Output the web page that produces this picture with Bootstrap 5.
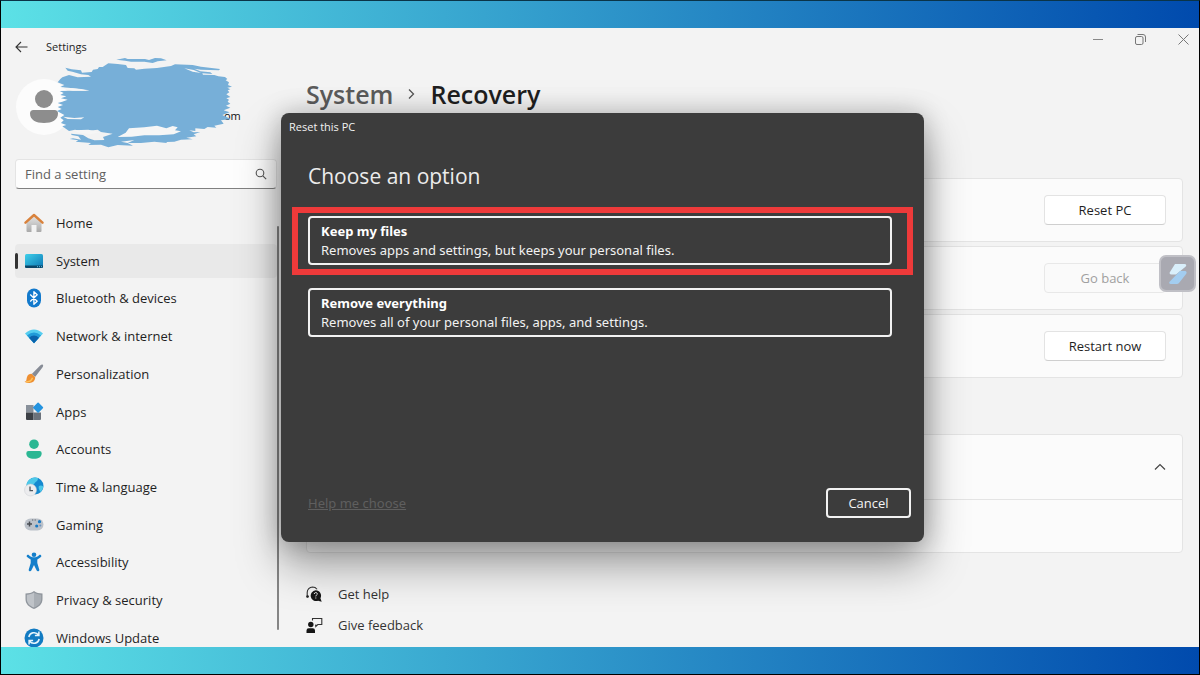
<!DOCTYPE html>
<html lang="en">
<head>
<meta charset="utf-8">
<meta name="viewport" content="width=device-width, initial-scale=1">
<title>Settings - Recovery</title>
<link href="https://cdn.jsdelivr.net/npm/bootstrap@5.3.0/dist/css/bootstrap.min.css" rel="stylesheet">
<style>
  body { font-family: "Open Sans", "Noto Sans", sans-serif; font-size: 13px; line-height: 20px; color: #1f1f1f; background: #f3f3f3; border: 1px solid #000; border-top-color: #0a3448; }
  .band { height: 27px; background: linear-gradient(90deg, #5ce1e6, #004aad); flex: none; }
  .app { min-height: 0; }
  .sidebar { width: 276px; padding-left: 14px; flex: none; }
  .titlebar { height: 38px; font-size: 11px; gap: 18px; }
  .titlebar button { line-height: 0; }
  .profile { height: 93px; padding-top: 13px; }
  .avatar { width: 56px; height: 56px; background: #fcfcfc; border-radius: 50%; margin-left: 1px; }
  .mail { left: 209px; top: 42px; font-size: 11px; line-height: 16px; color: #111; font-weight: 500; }
  .brush { left: 41px; top: -9px; }
  .search { height: 30px; background: #fdfdfd; border: 1px solid #e4e4e4; border-bottom: 1px solid #808080; border-radius: 4px; }
  .search input { font-size: 13px; line-height: 20px; padding: 0 0 0 9px; color: #333; }
  .search input::placeholder { color: #606060; opacity: 1; }
  .search button { width: 34px; line-height: 0; }
  .menu { margin: 17px 0 -8px; min-height: 440px; }
  .menu a { height: 34px; gap: 12px; padding-left: 9px; color: #1f1f1f; border-radius: 4px; position: relative; }
  .menu a.active { background: #e9e9e9; }
  .menu a.active::before { content: ""; position: absolute; left: 0; top: 9px; width: 3px; height: 16px; border-radius: 2px; background: #333; }
  .menu svg { width: 20px; height: 20px; flex: none; }
  .scroller { width: 2px; margin: 198px 0 17px; background: #858585; border-radius: 1px; flex: none; }
  .content { padding: 0 16px 0 27px; }
  .winctl { height: 22px; margin-right: -16px; }
  .winctl button { width: 43px; line-height: 0; padding: 0; }
  .winctl button:last-child { width: 31px; margin-left: 6px; }
  .crumbs { font-size: 25px; line-height: 34px; font-weight: 600; margin: 27px 0 67px; gap: 15px; }
  .crumbs a { color: #5c5c5c; }
  .pane { background: #fbfbfb; border: 1px solid #e4e4e4; border-radius: 4px; }
  .panes { gap: 4px; margin-bottom: 56px; }
  .panes .pane { height: 64px; padding-right: 16px; }
  .act { width: 122px; height: 30px; font-size: 13px; line-height: 20px; background: #fff; border: 1px solid #e3e3e3; border-bottom-color: #cfcfcf; border-radius: 4px; color: #1f1f1f; padding: 0; }
  .act:disabled { background: #fafafa; color: #a0a0a0; border-color: #e8e8e8; opacity: 1; }
  .expander { height: 65px; padding-right: 16px; border-bottom: 1px solid #e4e4e4; }
  .expander button { line-height: 0; }
  .expanded { height: 52px; }
  .links { margin-top: 31px; gap: 11px; }
  .links a { gap: 15px; color: #333; }
  .overlay { padding: 85px 0 0 5px; pointer-events: none; }
  .dlg { width: 643px; max-width: 100%; height: 429px; background: #3c3c3c; color: #f2f2f2; border-radius: 8px; box-shadow: 0 22px 44px rgba(0,0,0,.38), 0 0 26px rgba(0,0,0,.22); pointer-events: auto; }
  .dlg-title { font-size: 11px; line-height: 16px; padding: 6px 8px 0; }
  .dlg h1 { font-size: 21px; line-height: 30px; font-weight: 400; margin: 26px 27px 16px; color: #ececec; }
  .marked { border: 6px solid #ee3a3a; margin: 0 11px; padding: 3px 15px 4px 10px; }
  .option { border: 2px solid #f2f2f2; border-radius: 4px; height: 49px; padding: 0 11px; color: #f2f2f2; font-family: "Noto Sans", sans-serif; font-size: 13px; line-height: 19px; }
  .option strong { color: #fff; }
  .plain { margin: 13px 32px 0 27px; }
  .dlg-foot { padding: 0 13px 24px 27px; }
  .dlg-foot a { color: #5f5f5f; font-family: "Noto Sans", sans-serif; }
  .cancel { width: 85px; height: 30px; font-size: 13px; line-height: 20px; border: 2px solid #f2f2f2; border-radius: 4px; color: #f5f5f5; padding: 0; }
  .float-app { right: 3px; top: 227px; width: 37px; height: 37px; border-radius: 7px; background: #a9a9b1; border: 2px solid #c0c0c6; line-height: 0; }
</style>
</head>
<body class="d-flex flex-column vh-100 overflow-hidden">
<div class="band"></div>

<div class="app d-flex flex-fill position-relative overflow-hidden">
  <aside class="sidebar d-flex flex-column">
    <div class="titlebar d-flex align-items-center">
      <button class="btn p-0 border-0" aria-label="Back"><svg width="13" height="12" viewBox="0 0 13 12" fill="none" stroke="#333" stroke-width="1.100"><path d="M12.500 6H1M6 1L1 6l5 5"/></svg></button>
      <span>Settings</span>
    </div>
    <div class="profile position-relative">
      <div class="avatar">
        <svg width="56" height="56" viewBox="0 0 56 56" fill="#8d8d8d"><circle cx="28" cy="20" r="9"/><path d="M17.500 31h21a3.500 3.500 0 0 1 3.500 3.500C42 41 36 44 28 44s-14-3-14-9.500A3.500 3.500 0 0 1 17.500 31z"/></svg>
      </div>
      <span class="mail position-absolute">om</span>
      <svg class="brush position-absolute" width="177" height="92" viewBox="165 170 531 276" aria-hidden="true">
        <path fill="#77afd8" d="M346 178L372 173 380 176 432 176 444 179 462 173 480 174 497 180 470 183 455 188 430 184 390 184 372 181zM193 202L212 207 240 210 243 217 272 215 276 208 290 206 294 200 305 200 322 189 350 191 375 194 380 203 400 204 405 208 430 205 468 203 510 197 522 192 575 194 600 199 657 206 654 210 600 208 580 205 598 213 628 216 634 221 604 219 606 223 640 224 652 228 672 230 679 236 674 240 684 246 681 254 693 259 679 262 688 267 680 270 685 276 676 282 688 290 676 294 684 298 680 304 688 310 675 316 688 322 668 330 686 336 664 344 676 350 690 356 660 360 668 370 640 376 646 382 620 380 610 386 583 384 583 392 565 390 578 396 598 395 578 402 586 408 556 412 575 417 540 418 520 424 497 425 497 428 460 424 420 428 380 428 396 436 350 434 322 441 300 433 262 434 270 428 224 424 232 420 206 416 216 414 240 418 232 408 212 404 210 400 246 404 262 414 280 420 310 419 306 410 335 400 300 395 290 388 248 393 222 388 204 392 184 378 196 374 180 368 188 360 178 352 190 344 168 332 182 326 170 320 186 314 170 308 184 304 200 298 180 294 196 288 178 284 188 278 176 272 215 271 265 272 240 266 178 260 190 254 170 246 178 236 184 231 204 224 230 231 270 229 262 224 240 222 214 214 200 211z"/>
        <path fill="#f6f6f6" d="M384 384L430 381 468 376 496 384 515 377 530 381 522 390 540 393 518 402 475 405 430 405 392 409 350 410 374 397zM550 204L578 209 600 218 575 214zM186 349L220 353 250 351 240 357 200 356zM175 262L215 264 265 270 215 271zM360 424L400 419 380 428zM220 390L262 388 296 396 270 402 235 397z"/>
      </svg>
    </div>
    <form class="search d-flex align-items-center" onsubmit="return false">
      <input class="form-control border-0 bg-transparent shadow-none" type="text" placeholder="Find a setting" aria-label="Find a setting">
      <button class="btn p-0 border-0" aria-label="Search"><svg width="12" height="12" viewBox="0 0 12 12" fill="none" stroke="#555" stroke-width="1.100"><circle cx="5" cy="5" r="3.800"/><path d="M7.800 7.800L11.200 11.200"/></svg></button>
    </form>
    <nav class="menu flex-fill d-flex flex-column justify-content-between">
      <a href="#" class="d-flex align-items-center text-decoration-none">
        <svg viewBox="0 0 20 20"><defs><linearGradient id="gh" x2="0" y2="1"><stop stop-color="#e8e8e8"/><stop offset="1" stop-color="#a9a9a9"/></linearGradient></defs><path fill="url(#gh)" d="M2.500 8.500L10 2l7.500 6.500V18a1 1 0 0 1-1 1h-4v-7h-5v7h-4a1 1 0 0 1-1-1z"/><path d="M1.500 9.700L10 2l8.500 7.700" fill="none" stroke="#d9823c" stroke-width="2.400" stroke-linejoin="round" stroke-linecap="round"/></svg>Home</a>
      <a href="#" class="active d-flex align-items-center text-decoration-none" aria-current="page">
        <svg viewBox="0 0 20 20"><defs><linearGradient id="gs" x2="1" y2="1"><stop stop-color="#3fd0ea"/><stop offset="1" stop-color="#0c76b4"/></linearGradient></defs><rect x="1" y="3" width="18" height="14" rx="1.500" fill="url(#gs)"/><path d="M1 14.500h18v1a1.500 1.500 0 0 1-1.500 1.500h-15A1.500 1.500 0 0 1 1 15.500z" fill="#0b4668"/><path d="M13 15.700h1m1 0h1m1 0h1" stroke="#5ec4ea"/></svg>System</a>
      <a href="#" class="d-flex align-items-center text-decoration-none">
        <svg viewBox="0 0 20 20"><rect x="3" y="0.500" width="14" height="19" rx="7" fill="#1279cc"/><path d="M6.200 6.500l7 6.800-3.300 3V3.700l3.300 3-7 6.800" fill="none" stroke="#fff" stroke-width="1.300" stroke-linejoin="round"/></svg>Bluetooth &amp; devices</a>
      <a href="#" class="d-flex align-items-center text-decoration-none">
        <svg viewBox="0 0 20 20"><path d="M1 7.500Q10-.5 19 7.500L10 17.200z" fill="#55cdef"/><path d="M3 9.500q7-6 14 0L10 17.200z" fill="#209ad8"/><path d="M5 11.700q5-4.200 10 0L10 17.200z" fill="#0a62ab"/></svg>Network &amp; internet</a>
      <a href="#" class="d-flex align-items-center text-decoration-none">
        <svg viewBox="0 0 20 20"><path d="M18.800.8c.7.700.3 1.700-.4 2.700l-7.300 9.600-3.300-3.200L16.200 1.500c1-.8 1.900-1.300 2.600-.7z" fill="#878c96"/><path d="M7.500 9.800l3.700 3.500c.1 3.500-2.400 5.700-5.700 5.700-2 0-3.800-.4-5-1.200 2.500-.5 1.700-2.300 2.500-4.800.7-2 2.400-3.200 4.500-3.200z" fill="#ee8f31"/><path d="M2 17.800c2.800.2 5.500-1 6.500-4" stroke="#ffc35c" stroke-width="1.400" fill="none"/></svg>Personalization</a>
      <a href="#" class="d-flex align-items-center text-decoration-none">
        <svg viewBox="0 0 20 20"><path fill="#88909a" d="M2 3h7.500v7.500H2z"/><path fill="#3c4046" d="M2 10.500h7.500V18H3a1 1 0 0 1-1-1z"/><path fill="#6b727b" d="M9.500 10.500H17V17a1 1 0 0 1-1 1H9.500z"/><rect x="10.300" y="1.800" width="7.600" height="7.600" rx=".8" transform="rotate(45 14.100 5.600)" fill="#2493df"/></svg>Apps</a>
      <a href="#" class="d-flex align-items-center text-decoration-none">
        <svg viewBox="0 0 20 20" fill="#2bb793"><circle cx="10" cy="5.200" r="4.800"/><path d="M4.500 12h11a2.200 2.200 0 0 1 2.200 2.200C17.700 18 14.500 19.700 10 19.700S2.300 18 2.300 14.200A2.200 2.200 0 0 1 4.500 12z"/></svg>Accounts</a>
      <a href="#" class="d-flex align-items-center text-decoration-none">
        <svg viewBox="0 0 20 20"><circle cx="11" cy="9" r="8.500" fill="#1589cf"/><path d="M4 4C6.500 1 11-.5 14 1.200c0 3-2.500 3-3.500 5.300-1 2-3 1.500-5 2.500L2.500 8.500C2.700 6.500 3 5.300 4 4zM15 9c1.500-1 3-.5 4.300.5-.3 2.500-1.400 4-3 5.500-1-2-2.300-4-1.300-6z" fill="#4cc8e8"/><circle cx="6.500" cy="13" r="6" fill="#ececee" stroke="#c9ccd0" stroke-width=".5"/><path d="M6 9.500v4.200h3" fill="none" stroke="#505860" stroke-width="1.300"/></svg>Time &amp; language</a>
      <a href="#" class="d-flex align-items-center text-decoration-none">
        <svg viewBox="0 0 20 20"><rect x=".5" y="3.500" width="19" height="12" rx="6" fill="#bcc2ca"/><path d="M3 9h5M5.500 6.500v5" stroke="#484c53" stroke-width="1.500"/><g fill="#1979c4"><circle cx="15.500" cy="6.700" r="1.600"/><circle cx="12.700" cy="11" r="1.600"/></g><circle cx="16.300" cy="10.500" r="1" fill="#6d93bd"/><path d="M8.200 5h1m1.500 0h1" stroke="#484c53"/></svg>Gaming</a>
      <a href="#" class="d-flex align-items-center text-decoration-none">
        <svg viewBox="0 0 20 20" fill="#147fcb"><circle cx="10" cy="2.700" r="2.300"/><path d="M3 3.200c.6-.6 1.300-.5 2 0 2.500 2.700 7.500 2.700 10 0 .7-.5 1.400-.6 2 0 .5.700.4 1.300-.1 1.900-1 1-2.200 1.800-3.600 2.400V11l2 6.800c.2 1.500-2 2.200-2.600.8L10 13l-2.700 5.600c-.6 1.400-2.800.7-2.600-.8l2-6.800V7.500C5.300 6.900 4.100 6.100 3.100 5.100c-.5-.6-.6-1.200-.1-1.900z"/></svg>Accessibility</a>
      <a href="#" class="d-flex align-items-center text-decoration-none">
        <svg viewBox="0 0 20 20"><path d="M10 1c2.500 1.800 5 2.400 8.500 2.500V9c0 5-3.500 8-8.500 10C5 17 1.500 14 1.500 9V3.500C5 3.400 7.500 2.800 10 1z" fill="#8f959c"/><path d="M10 2.500c2.300 1.400 4.500 2 7.200 2.200V9c0 4.200-2.900 6.800-7.200 8.600z" fill="#a9aeb4"/><path d="M10 2.500C7.700 3.900 5.500 4.500 2.800 4.700V9c0 4.200 2.900 6.800 7.200 8.600z" fill="#bfc3c8"/></svg>Privacy &amp; security</a>
      <a href="#" class="d-flex align-items-center text-decoration-none">
        <svg viewBox="0 0 20 20"><circle cx="10" cy="10" r="9.500" fill="#127bc2"/><path d="M4.800 9A5.400 5.400 0 0 1 14.500 7M15.200 11a5.400 5.400 0 0 1-9.700 2M14.900 3.500v4h-4M5.100 16.500v-4h4" fill="none" stroke="#e8f6fd" stroke-width="1.500"/></svg>Windows Update</a>
    </nav>
  </aside>
  <div class="scroller"></div>

  <main class="content flex-fill d-flex flex-column">
    <div class="winctl d-flex justify-content-end">
      <button class="btn border-0" aria-label="Minimize"><svg width="10" height="10" viewBox="0 0 10 10"><path d="M0 5.500h10" stroke="#888"/></svg></button>
      <button class="btn border-0" aria-label="Restore"><svg width="11" height="11" viewBox="0 0 11 11" fill="none" stroke="#777"><rect x=".5" y="2.500" width="7.500" height="8" rx="1.500"/><path d="M2.500.5H8A2.500 2.500 0 0 1 10.500 3v5"/></svg></button>
      <button class="btn border-0" aria-label="Close"><svg width="11" height="11" viewBox="0 0 11 11"><path d="M.5.5l10 10M10.500.5l-10 10" stroke="#777"/></svg></button>
    </div>
    <div class="crumbs d-flex align-items-center">
      <a href="#" class="text-decoration-none">System</a>
      <svg width="7" height="12" viewBox="0 0 7 12" fill="none" stroke="#555" stroke-width="1.300"><path d="M1 1.500L5.500 6 1 10.500"/></svg>
      <span>Recovery</span>
    </div>
    <section class="panes d-flex flex-column">
      <div class="pane d-flex align-items-center justify-content-end"><button class="btn act">Reset PC</button></div>
      <div class="pane d-flex align-items-center justify-content-end"><button class="btn act" disabled>Go back</button></div>
      <div class="pane d-flex align-items-center justify-content-end"><button class="btn act">Restart now</button></div>
    </section>
    <section class="pane">
      <div class="expander d-flex align-items-center justify-content-end">
        <button class="btn p-0 border-0" aria-label="Collapse"><svg width="12" height="8" viewBox="0 0 12 8" fill="none" stroke="#444" stroke-width="1.200"><path d="M1 6.500l5-5 5 5"/></svg></button>
      </div>
      <div class="expanded"></div>
    </section>
    <div class="links d-flex flex-column">
      <a href="#" class="d-flex align-items-center text-decoration-none"><svg width="17" height="17" viewBox="0 0 17 17"><path d="M1.200 10V6.500A5.500 5.500 0 0 1 6.500 1c2 0 3.500.8 4.500 2.200M1.200 8v3.500" fill="none" stroke="#333" stroke-width="1.100"/><circle cx="1.600" cy="10.500" r="1.300" fill="#222"/><path d="M9.700 4.300a5.400 5.400 0 0 1 4.700 8l1.300 3.500-3.600-1.100A5.400 5.400 0 1 1 9.700 4.300z" fill="#151515"/><path d="M8.200 8c.2-2 3.200-1.800 3.100-.1 0 1.200-1.500 1.200-1.500 2.500M9.800 11.500v1" fill="none" stroke="#eee"/></svg>Get help</a>
      <a href="#" class="d-flex align-items-center text-decoration-none"><svg width="17" height="17" viewBox="0 0 17 17"><circle cx="4.800" cy="7.500" r="2.700" fill="#151515"/><path d="M.5 16v-2.500A2.300 2.300 0 0 1 2.800 11.200h4A2.300 2.300 0 0 1 9 13.500V16z" fill="#151515"/><path d="M6.500 3.500V1.500h9.300v6h-4l-2 2v-2" fill="none" stroke="#333" stroke-width="1.100"/></svg>Give feedback</a>
    </div>
  </main>

  <button class="float-app btn position-absolute p-0" aria-label="Assistant"><svg width="22" height="24" viewBox="0 0 22 24"><path d="M8 2h9.500c2 0 2.300 1.500 1 2.700L9 12.500H4.500C2.500 12.500 2 11 3.300 9.500z" fill="#d9effb"/><path d="M13 9h4.500c2.300 0 2.800 1.700 1.200 3.400L12 21c-.8.800-1.500 1-2.500 1H3.800c-1.800 0-2-1.300-1-2.400z" fill="#a3cdf0"/></svg></button>

  <div class="overlay position-absolute top-0 start-0 w-100 d-flex justify-content-center">
    <div class="dlg d-flex flex-column" role="dialog" aria-label="Reset this PC">
      <div class="dlg-title">Reset this PC</div>
      <h1>Choose an option</h1>
      <div class="marked">
        <button class="btn option w-100 text-start d-flex flex-column justify-content-center"><strong>Keep my files</strong><span>Removes apps and settings, but keeps your personal files.</span></button>
      </div>
      <div class="plain">
        <button class="btn option w-100 text-start d-flex flex-column justify-content-center"><strong>Remove everything</strong><span>Removes all of your personal files, apps, and settings.</span></button>
      </div>
      <div class="dlg-foot d-flex justify-content-between align-items-center mt-auto">
        <a href="#">Help me choose</a>
        <button class="btn cancel">Cancel</button>
      </div>
    </div>
  </div>
</div>

<div class="band"></div>
<script src="https://cdn.jsdelivr.net/npm/bootstrap@5.3.0/dist/js/bootstrap.bundle.min.js"></script>
</body>
</html>
